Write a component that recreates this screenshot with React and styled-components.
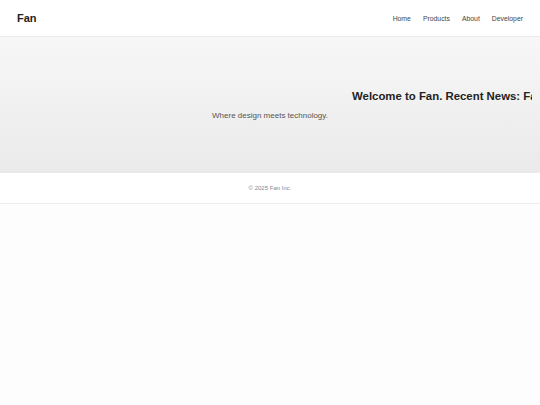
import React from "react";
import styled, { createGlobalStyle } from "styled-components";

const GlobalStyle = createGlobalStyle`
  html, body {
    margin: 0;
    padding: 0;
    background: #fdfdfd;
    font-family: "Liberation Sans", Arial, sans-serif;
  }
`;

const Header = styled.header`
  height: 36px;
  padding: 0 17px;
  display: flex;
  align-items: center;
  justify-content: space-between;
  background: #ffffff;
  border-bottom: 1px solid #ebebeb;
`;

const Logo = styled.div`
  font-size: 11px;
  font-weight: 700;
  color: #222;
`;

const Nav = styled.nav`
  display: flex;
  gap: 12px;
`;

const NavLink = styled.a`
  font-size: 6.85px;
  color: #444;
  text-decoration: none;
`;

const Hero = styled.section`
  height: 136px;
  padding: 0 8px;
  display: flex;
  flex-direction: column;
  justify-content: center;
  background: linear-gradient(to bottom, #f7f7f7, #eaeaea);
`;

const Marquee = styled.div`
  overflow: hidden;
  margin-bottom: 8px;
`;

const MarqueeTrack = styled.h1`
  margin: 0;
  padding-left: 344px;
  white-space: nowrap;
  font-size: 11.4px;
  line-height: 14px;
  font-weight: 700;
  color: #222;
`;

const Tagline = styled.p`
  margin: 0;
  text-align: center;
  font-size: 8px;
  line-height: 10px;
  color: #555;
`;

const Footer = styled.footer`
  height: 30px;
  display: flex;
  align-items: center;
  justify-content: center;
  background: #ffffff;
  border-bottom: 1px solid #ececec;
  font-size: 6px;
  color: #888;
`;

const links = ["Home", "Products", "About", "Developer"];

const App = () => (
  <>
    <GlobalStyle />
    <Header>
      <Logo>Fan</Logo>
      <Nav>
        {links.map((l) => (
          <NavLink key={l} href="#">
            {l}
          </NavLink>
        ))}
      </Nav>
    </Header>
    <Hero>
      <Marquee>
        <MarqueeTrack>
          Welcome to Fan. Recent News: Fan launches its new developer platform.
        </MarqueeTrack>
      </Marquee>
      <Tagline>Where design meets technology.</Tagline>
    </Hero>
    <Footer>© 2025 Fan Inc.</Footer>
  </>
);

export default App;
